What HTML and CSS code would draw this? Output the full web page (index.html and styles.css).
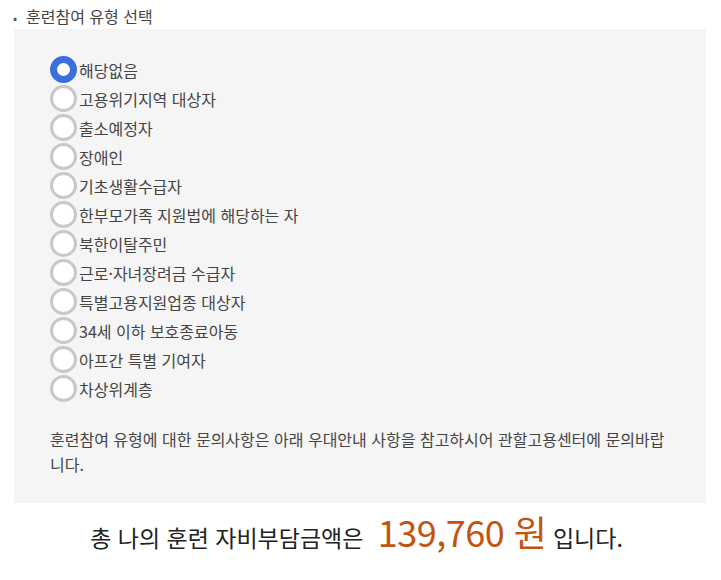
FILE: index.html
```html
<!DOCTYPE html>
<html lang="ko-KR">

<head>
    <meta charset="UTF-8" />
    <meta name="viewport" content="width=device-width, initial-scale=1.0" />
    <title>훈련참여 유형 선택</title>
    <link rel="stylesheet" href="styles.css">
</head>

<body>
    <section class="typeSection">
        <h3 class="sectionTitle">훈련참여 유형 선택</h3>
        <div class="typeBox">
            <ul class="typeList">
                <li><label><input type="radio" name="trainType" value="0" checked /><span>해당없음</span></label></li>
                <li><label><input type="radio" name="trainType" value="1" /><span>고용위기지역 대상자</span></label></li>
                <li><label><input type="radio" name="trainType" value="2" /><span>출소예정자</span></label></li>
                <li><label><input type="radio" name="trainType" value="3" /><span>장애인</span></label></li>
                <li><label><input type="radio" name="trainType" value="4" /><span>기초생활수급자</span></label></li>
                <li><label><input type="radio" name="trainType" value="5" /><span>한부모가족 지원법에 해당하는 자</span></label></li>
                <li><label><input type="radio" name="trainType" value="6" /><span>북한이탈주민</span></label></li>
                <li><label><input type="radio" name="trainType" value="7" /><span>근로·자녀장려금 수급자</span></label></li>
                <li><label><input type="radio" name="trainType" value="8" /><span>특별고용지원업종 대상자</span></label></li>
                <li><label><input type="radio" name="trainType" value="9" /><span>34세 이하 보호종료아동</span></label></li>
                <li><label><input type="radio" name="trainType" value="10" /><span>아프간 특별 기여자</span></label></li>
                <li><label><input type="radio" name="trainType" value="11" /><span>차상위계층</span></label></li>
            </ul>
            <p class="typeNotice">훈련참여 유형에 대한 문의사항은 아래 우대안내 사항을 참고하시어 관할고용센터에 문의바랍니다.</p>
        </div>
    </section>

    <p class="totalCost">총 나의 훈련 자비부담금액은 <strong class="costNum">139,760 원</strong> 입니다.</p>
</body>

</html>
```

FILE: styles.css
```css
* {
    box-sizing: border-box;
}

body {
    margin: 0;
    font-family: "Noto Sans CJK KR", "Noto Sans", sans-serif;
    color: #444;
    background: #fff;
}

.sectionTitle {
    margin: 0;
    padding: 5px 0 0 13px;
    font-size: 16px;
    font-weight: normal;
    line-height: 22px;
    color: #444;
}

.sectionTitle::before {
    content: "•";
    display: inline-block;
    width: 13px;
    color: #555;
    font-size: 12px;
}

.typeBox {
    margin: 0 15px 0 14px;
    padding: 26px 16px 26px 36px;
    background-color: #f5f5f5;
}

.typeList {
    list-style: none;
    margin: 0;
    padding: 0;
}

.typeList li {
    height: 29px;
    display: flex;
    align-items: center;
}

.typeList label {
    display: flex;
    align-items: center;
    gap: 2px;
    font-size: 16px;
    color: #444;
}

.typeList input {
    appearance: none;
    -webkit-appearance: none;
    width: 27px;
    height: 27px;
    margin: 0;
    border: 3px solid #c8c8c8;
    border-radius: 50%;
    background-color: #fff;
}

.typeList input:checked {
    border: 7px solid #3b6fd9;
}

.typeNotice {
    margin: 24px 0 0;
    width: 622px;
    font-size: 16px;
    line-height: 25px;
    color: #444;
}

.totalCost {
    margin: 0;
    text-align: center;
    font-size: 23px;
    line-height: 56px;
    color: #222;
    padding-right: 8px;
}

.costNum {
    margin-left: 8px;
    font-size: 36px;
    font-weight: normal;
    color: #c1540f;
    letter-spacing: -0.5px;
}
```
